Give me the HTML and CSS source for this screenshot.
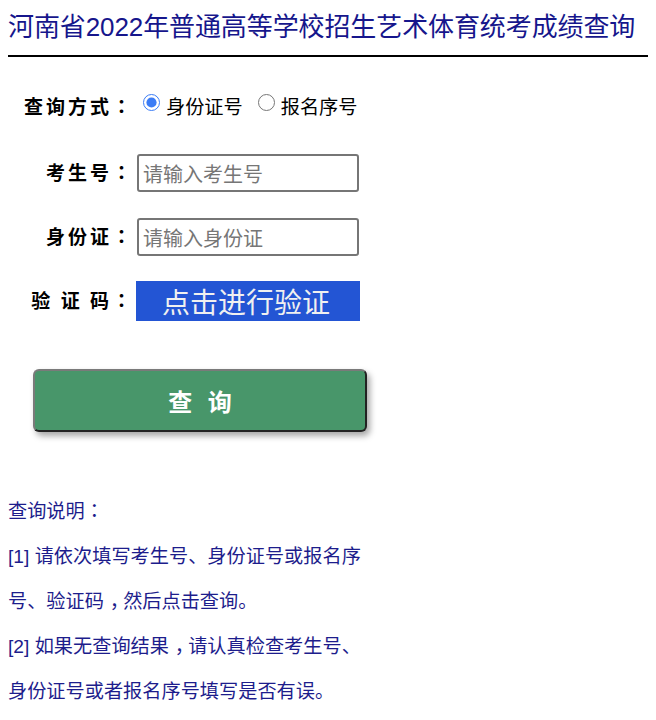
FILE: index.html
```html
<!DOCTYPE html>
<html lang="zh-CN">
<head>
<meta charset="utf-8">
<title>河南省2022年普通高等学校招生艺术体育统考成绩查询</title>
<link rel="stylesheet" href="styles.css">
</head>
<body>
<h1 class="title">河南省2022年普通高等学校招生艺术体育统考成绩查询</h1>
<div class="rule"></div>
<form class="form">
  <div class="row row-first">
    <span class="label">查询方式<span class="p" lang="zh-TW">：</span></span>
    <div class="radios">
      <label class="opt"><input type="radio" name="mode" checked><span>身份证号</span></label>
      <label class="opt"><input type="radio" name="mode"><span>报名序号</span></label>
    </div>
  </div>
  <div class="row">
    <span class="label">考生号<span class="p" lang="zh-TW">：</span></span>
    <input class="field" type="text" placeholder="请输入考生号">
  </div>
  <div class="row">
    <span class="label">身份证<span class="p" lang="zh-TW">：</span></span>
    <input class="field" type="text" placeholder="请输入身份证">
  </div>
  <div class="row">
    <span class="label">验 证 码<span class="p" lang="zh-TW">：</span></span>
    <div class="verify">点击进行验证</div>
  </div>
  <button class="submit" type="button">查 询</button>
</form>
<div class="notes">
  <p>查询说明<span class="p" lang="zh-TW">：</span></p>
  <p>[1] 请依次填写考生号、身份证号或报名序号、验证码<span class="c">，</span>然后点击查询。</p>
  <p>[2] 如果无查询结果<span class="c">，</span>请认真检查考生号、身份证号或者报名序号填写是否有误。</p>
</div>
</body>
</html>
```
FILE: styles.css
```css
html, body {
  margin: 0;
  padding: 0;
  background: #fff;
}
body {
  margin: 8px;
  font-family: "Liberation Sans", "Noto Sans CJK SC", sans-serif;
  color: #000;
  overflow: hidden;
}
.p {
  font-family: "Noto Sans CJK TC", sans-serif;
  line-height: 0;
}
.c {
  padding-left: 0.3em;
  margin-right: -0.3em;
}
.title {
  margin: 4px 0 0;
  font-size: 26px;
  line-height: 31px;
  font-weight: normal;
  color: #16168c;
  letter-spacing: -0.1px;
  white-space: nowrap;
}
.rule {
  margin: 12px -8px 0 0;
  border-top: 2px solid #000;
}
.form {
  margin: 29px 0 0;
  display: flex;
  flex-direction: column;
}
.row {
  display: flex;
  align-items: center;
  height: 40px;
  margin-bottom: 24px;
}
.row-first {
  margin-bottom: 27px;
}
.label {
  width: 126px;
  flex: none;
  text-align: right;
  font-family: "Noto Sans CJK SC", sans-serif;
  font-weight: bold;
  font-size: 19px;
  line-height: 26px;
  letter-spacing: 3px;
  margin-right: 3px;
  padding-bottom: 3px;
  white-space: pre;
}
.row-first .label {
  padding-bottom: 0;
}
.radios {
  display: flex;
  align-items: center;
  gap: 13px;
  margin-left: 4px;
}
.opt {
  display: flex;
  align-items: center;
  font-family: "Noto Sans CJK SC", sans-serif;
  font-size: 19.2px;
}
.opt input {
  width: 17px;
  height: 17px;
  margin: 0 6px 8px 2px;
  accent-color: #3b7cf5;
}
.field {
  box-sizing: border-box;
  width: 222px;
  height: 38px;
  margin: 0;
  padding: 0 4px;
  border: 2px solid #767676;
  border-radius: 3px;
  font-family: "Noto Sans CJK SC", sans-serif;
  font-size: 20px;
  color: #000;
  background: #fff;
  outline: none;
}
.field::placeholder {
  color: #767676;
}
.verify {
  box-sizing: border-box;
  width: 224px;
  height: 40px;
  margin-left: -1px;
  background: #2355d4;
  color: #f0f0f0;
  font-family: "Noto Sans CJK SC", sans-serif;
  font-size: 28px;
  line-height: 40px;
  text-align: center;
  padding-right: 4px;
}
.submit {
  box-sizing: border-box;
  align-self: flex-start;
  width: 334px;
  height: 63px;
  margin: 24px 0 0 25px;
  padding: 0;
  background: #48966a;
  border: 2px solid;
  border-color: #7a7a7a #222 #222 #7a7a7a;
  border-radius: 6px;
  box-shadow: 3px 4px 6px rgba(0, 0, 0, 0.35);
  color: #fff;
  font-family: "Noto Sans CJK SC", sans-serif;
  font-weight: bold;
  font-size: 24px;
  letter-spacing: 5px;
  text-indent: 5px;
  white-space: pre;
  cursor: pointer;
}
.notes {
  margin-top: 57px;
  width: 360px;
  color: #1d1d8c;
  font-family: "Liberation Sans", "Noto Sans CJK SC", sans-serif;
  font-size: 19.2px;
  line-height: 45px;
}
.notes p {
  margin: 0;
}
```
